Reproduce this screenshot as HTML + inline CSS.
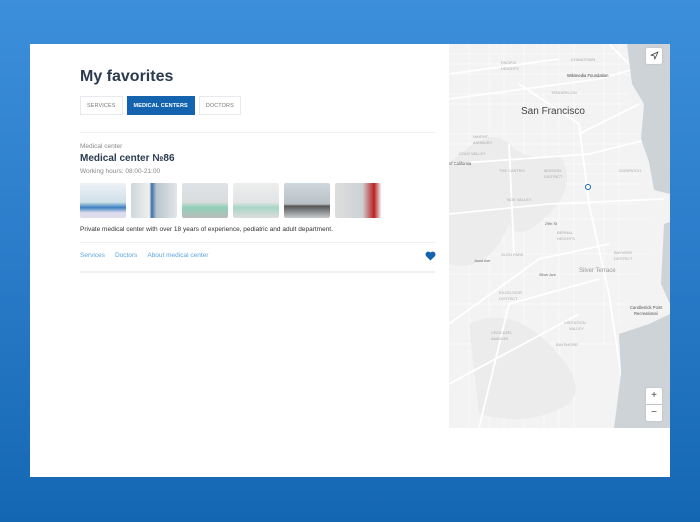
<!DOCTYPE html>
<html><head><style>
*{margin:0;padding:0;box-sizing:border-box}
body{width:700px;height:522px;overflow:hidden;background:linear-gradient(180deg,#3c8fda 0%,#2a7cc9 50%,#1467b2 100%);font-family:"Liberation Sans",sans-serif;position:relative}
.card{position:absolute;left:30px;top:44px;width:640px;height:433px;background:#fff}
h1{position:absolute;left:50px;top:24px;font-size:16px;font-weight:bold;color:#2b3a4e}
.tabs{position:absolute;left:50px;top:52px;display:flex;gap:4px}
.tab{height:19px;border:1px solid #e6e9ee;font-size:5.5px;color:#777;padding:0 6px;line-height:18px;letter-spacing:.1px}
.tab.a{background:#1463ae;color:#fff;border-color:#1463ae;font-weight:bold}
.hr{position:absolute;left:50px;width:355px;height:1px;background:#eef0f3}
.t{position:absolute;left:50px;color:#888;font-size:6.5px}
.map{position:absolute;left:419px;top:0;width:221px;height:384px;background:#f3f3f3;overflow:hidden}
.thumbs{position:absolute;left:50px;top:139px;display:flex;gap:5px}
.thumbs div{width:46px;height:35px;border-radius:2px}
.btn{position:absolute;width:16px;height:16px;background:#fff;border-radius:2px;box-shadow:0 0 2px #bbb;font-size:10px;text-align:center;line-height:16px;color:#444}
.map text{font-family:"Liberation Sans",sans-serif}
</style></head><body>
<div class="card">
<h1>My favorites</h1>
<div class="tabs"><div class="tab">SERVICES</div><div class="tab a">MEDICAL CENTERS</div><div class="tab">DOCTORS</div></div>
<div class="hr" style="top:88px"></div>
<div class="t" style="top:99px">Medical center</div>
<div style="position:absolute;left:50px;top:109px;font-size:10px;font-weight:bold;color:#2b3a4e">Medical center №86</div>
<div class="t" style="top:124px">Working hours: 08:00-21:00</div>
<div class="thumbs"><div style="background:linear-gradient(#eef3f6,#cfe0ea 55%,#3d7fc0 70%,#dde 85%)"></div><div style="background:linear-gradient(90deg,#cfd6da,#eef0f0 40%,#3a6fa8 45%,#b8c4cc 55%,#e4e6e8)"></div><div style="background:linear-gradient(#dfe3e6,#d9dcdd 55%,#8fd0b8 70%,#bbb)"></div><div style="background:linear-gradient(#eee,#e2e4e6 55%,#a8d6c6 70%,#ddd)"></div><div style="background:linear-gradient(#cfd6dc,#b9c1c6 60%,#555 66%,#c8cccf)"></div><div style="background:linear-gradient(90deg,#ddd,#ccd2d6 60%,#b22 85%,#eee)"></div></div>
<div style="position:absolute;left:50px;top:182px;font-size:6.5px;color:#333">Private medical center with over 18 years of experience, pediatric and adult department.</div>
<div class="hr" style="top:198px"></div>
<div style="position:absolute;left:50px;top:208px;font-size:6.5px;color:#5aa6e0"><span>Services</span><span style="margin-left:10px">Doctors</span><span style="margin-left:10px">About medical center</span></div>
<svg style="position:absolute;left:395px;top:207px" width="11" height="10" viewBox="0 0 24 22"><path d="M12 21 2.5 11.5A5.8 5.8 0 0 1 12 3.5a5.8 5.8 0 0 1 9.5 8z" fill="#1463ae"/></svg>
<div class="hr" style="top:227px;height:2px"></div>
<div class="map">
<svg width="221" height="384" style="position:absolute;left:0;top:0">
<g stroke="#fff" stroke-width="0.6" fill="none" opacity=".9">
<path d="M0 10H190M0 20H190M0 30H185M0 50H180M0 60H180M0 90H190M0 100H190M0 120H190M0 130H190M0 140H190M0 160H190M0 175H200M0 210H200M0 230H190M0 260H180M0 300H180M20 0V384M40 0V384M55 0V384M75 0V384M95 0V384M110 0V384M125 0V384M155 0V300M170 0V280"/>
</g>
<path d="M0 120 Q40 80 60 100 T110 110 Q130 140 100 170 T60 180 Q40 230 0 220Z M20 280 Q60 260 100 300 T120 360 Q80 384 30 370Z" fill="#ececec"/>
<g stroke="#fff" stroke-width="1.8" fill="none">
<path d="M0 30 L110 15 M0 55 L150 35 L185 25 M70 40 L130 80 L140 160 L160 250 L180 384 M0 120 L140 110 M140 110 L200 95 M0 170 L100 160 L215 155 M60 100 L65 210 M0 280 L90 215 L160 200 M30 384 L60 260 L150 235 M0 340 L130 270 M160 0 L200 40 M130 90 L190 60 M190 40 L215 0"/>
</g>
<path d="M178 0 L221 0 L221 150 L205 146 L200 118 L192 95 L195 60 L183 40 Z" fill="#cdd3d7"/>
<path d="M170 290 L200 280 L221 270 L221 384 L165 384 L172 330 Z" fill="#cdd3d7"/>
<path d="M215 180 L221 178 L221 260 L212 240 Z" fill="#cdd3d7"/>
<text x="72" y="70" font-size="10" fill="#444">San Francisco</text>
<text x="118" y="33" font-size="4.2" fill="#444">Wikimedia Foundation</text>
<text x="122" y="17" font-size="4" fill="#aaa">CHINATOWN</text>
<text x="52" y="20" font-size="4" fill="#aaa">PACIFIC</text>
<text x="52" y="26" font-size="4" fill="#aaa">HEIGHTS</text>
<text x="102" y="50" font-size="4" fill="#aaa">TENDERLOIN</text>
<text x="24" y="94" font-size="4" fill="#aaa">HAIGHT-</text>
<text x="24" y="100" font-size="4" fill="#aaa">ASHBURY</text>
<text x="10" y="111" font-size="4" fill="#aaa">COLE VALLEY</text>
<text x="0" y="121" font-size="4.2" fill="#555">of California</text>
<text x="50" y="128" font-size="4" fill="#aaa">THE CASTRO</text>
<text x="95" y="128" font-size="4" fill="#aaa">MISSION</text>
<text x="95" y="134" font-size="4" fill="#aaa">DISTRICT</text>
<text x="170" y="128" font-size="4" fill="#aaa">DOGPATCH</text>
<text x="58" y="157" font-size="4" fill="#aaa">NOE VALLEY</text>
<text x="108" y="190" font-size="4" fill="#aaa">BERNAL</text>
<text x="108" y="196" font-size="4" fill="#aaa">HEIGHTS</text>
<text x="52" y="212" font-size="4" fill="#aaa">GLEN PARK</text>
<text x="165" y="210" font-size="4" fill="#aaa">BAYVIEW</text>
<text x="165" y="216" font-size="4" fill="#aaa">DISTRICT</text>
<text x="130" y="228" font-size="6" fill="#999">Silver Terrace</text>
<text x="50" y="250" font-size="4" fill="#aaa">EXCELSIOR</text>
<text x="50" y="256" font-size="4" fill="#aaa">DISTRICT</text>
<text x="115" y="280" font-size="4" fill="#aaa">VISITATION</text>
<text x="120" y="286" font-size="4" fill="#aaa">VALLEY</text>
<text x="42" y="290" font-size="4" fill="#aaa">CROCKER-</text>
<text x="42" y="296" font-size="4" fill="#aaa">AMAZON</text>
<text x="107" y="302" font-size="4" fill="#aaa">BAYSHORE</text>
<text x="181" y="265" font-size="4.2" fill="#555">Candlestick Point</text>
<text x="185" y="271" font-size="4.2" fill="#555">Recreational</text>
<text x="96" y="181" font-size="3.8" fill="#666">29th St</text>
<text x="90" y="232" font-size="3.8" fill="#666">Silver Ave</text>
<text x="25" y="218" font-size="3.8" fill="#666">Joost Ave</text>
<circle cx="139" cy="143" r="2.5" fill="#fff" stroke="#1463ae" stroke-width="1"/>
</svg>
<div class="btn" style="left:197px;top:4px"><svg width="9" height="9" viewBox="0 0 24 24" style="margin-top:3px"><path d="M3 11 21 3 13 21 11 13z" fill="none" stroke="#333" stroke-width="2"/></svg></div>
<div class="btn" style="left:197px;top:344px;border-radius:2px 2px 0 0">+</div>
<div class="btn" style="left:197px;top:361px;border-radius:0 0 2px 2px">−</div>
</div>
</div>
</body></html>
